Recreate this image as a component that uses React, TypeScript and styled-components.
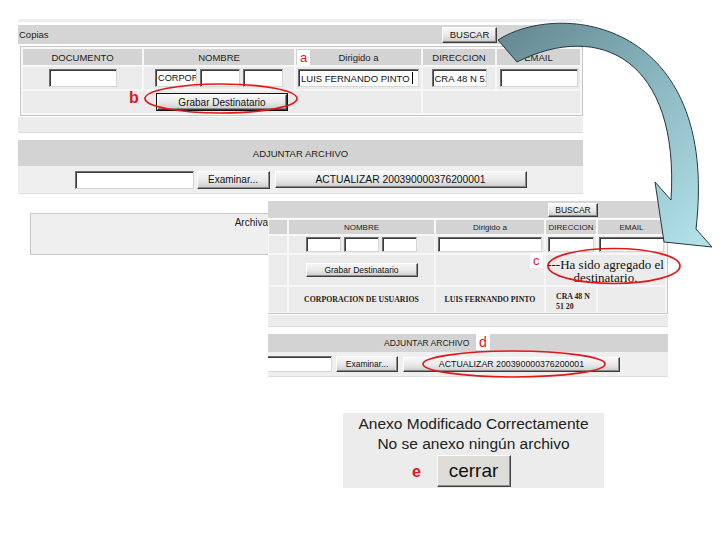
import React from "react";
import styled, { createGlobalStyle } from "styled-components";

const Global = createGlobalStyle`
  html, body { margin: 0; padding: 0; background: #ffffff; }
  #root { width: 720px; height: 540px; }
`;

const Page = styled.div`
  position: relative;
  width: 720px;
  height: 540px;
  overflow: hidden;
  background: #ffffff;
  font-family: "Liberation Sans", Arial, sans-serif;
  color: #1c1c1c;
`;

const Shot = styled.section<{ $x: number; $y: number; $w: number; $h: number }>`
  position: absolute;
  left: ${(p) => p.$x}px;
  top: ${(p) => p.$y}px;
  width: ${(p) => p.$w}px;
  height: ${(p) => p.$h}px;
  display: flex;
  flex-direction: column;
  background: #ffffff;
  overflow: hidden;
`;

const TopLine = styled.div<{ $h: number; $mt: number }>`
  flex: none;
  height: ${(p) => p.$h}px;
  margin-top: ${(p) => p.$mt}px;
  background: #eeeeee;
`;

const Bar = styled.div<{ $h: number; $mt: number; $fs: number; $pr: number }>`
  flex: none;
  height: ${(p) => p.$h}px;
  margin-top: ${(p) => p.$mt}px;
  background: #d5d5d5;
  display: flex;
  align-items: center;
  padding: 0 ${(p) => p.$pr}px 0 1px;
  font-size: ${(p) => p.$fs}px;
`;

const BarTitle = styled.span`
  flex: 1;
`;

const Button = styled.button<{ $w: number; $h: number; $fs: number; $default?: boolean }>`
  box-sizing: border-box;
  flex: none;
  width: ${(p) => p.$w}px;
  height: ${(p) => p.$h}px;
  padding: 0;
  margin: 0;
  font-family: "Liberation Sans", Arial, sans-serif;
  font-size: ${(p) => p.$fs}px;
  color: #111111;
  background: linear-gradient(#f7f7f7 0%, #e8e8e8 55%, #cbcbcb 100%);
  border: 1px solid;
  border-color: #ffffff #3c3c3c #3c3c3c #ffffff;
  box-shadow: inset -1px -1px 0 #8a8a8a${(p) => (p.$default ? ", 0 0 0 1px #111111" : "")};
  white-space: nowrap;
  overflow: hidden;
  cursor: default;
`;

const Field = styled.div<{ $w: number; $h: number; $fs: number; $ml?: number }>`
  box-sizing: border-box;
  flex: none;
  width: ${(p) => p.$w}px;
  height: ${(p) => p.$h}px;
  margin-left: ${(p) => p.$ml ?? 0}px;
  background: #ffffff;
  border: 1px solid;
  border-color: #6e6e6e #d6d6d6 #d6d6d6 #6e6e6e;
  box-shadow: inset 1px 1px 0 #3a3a3a;
  font-size: ${(p) => p.$fs}px;
  padding: 0 1px 0 2px;
  display: flex;
  align-items: center;
  white-space: nowrap;
  overflow: hidden;
  color: #111111;
`;

const Caret = styled.span`
  flex: none;
  display: inline-block;
  width: 1px;
  height: 12px;
  margin-left: 2px;
  background: #000000;
`;

const Frame = styled.div<{ $mt: number; $ml: number; $pad: string; $openLeft?: boolean }>`
  flex: none;
  margin: ${(p) => p.$mt}px 0 0 ${(p) => p.$ml}px;
  border: 1px solid #c6c6c6;
  ${(p) => (p.$openLeft ? "border-left: none; border-top: none;" : "")}
  background: #f7f7f7;
  padding: ${(p) => p.$pad};
`;

const Grid = styled.div<{ $cols: string; $rows: string; $fs: number }>`
  display: grid;
  grid-template-columns: ${(p) => p.$cols};
  grid-template-rows: ${(p) => p.$rows};
  gap: 2px;
  font-size: ${(p) => p.$fs}px;
`;

const HeadCell = styled.div`
  background: #d3d3d3;
  display: flex;
  align-items: center;
  justify-content: center;
  white-space: nowrap;
`;

const Cell = styled.div<{ $span?: string; $justify?: string; $pl?: number; $pt?: number; $gap?: number }>`
  grid-column: ${(p) => p.$span ?? "auto"};
  background: #ebebeb;
  display: flex;
  align-items: center;
  justify-content: ${(p) => p.$justify ?? "center"};
  padding-left: ${(p) => p.$pl ?? 0}px;
  padding-top: ${(p) => p.$pt ?? 0}px;
  gap: ${(p) => p.$gap ?? 3}px;
  min-width: 0;
`;

const DataText = styled.span`
  font-family: "Liberation Serif", "Times New Roman", serif;
  font-weight: bold;
  font-size: 7.8px;
  line-height: 10px;
  white-space: nowrap;
  color: #222222;
`;

const Message = styled.span`
  font-family: "Liberation Serif", "Times New Roman", serif;
  font-size: 13px;
  line-height: 13px;
  text-align: center;
  color: #111111;
  white-space: nowrap;
  padding-top: 2px;
`;

const Strip = styled.div<{ $h: number; $mt: number }>`
  flex: none;
  box-sizing: border-box;
  height: ${(p) => p.$h}px;
  margin-top: ${(p) => p.$mt}px;
  background: #ececec;
  border-bottom: 1px solid #dcdcdc;
`;

const SectionHead = styled.div<{ $h: number; $mt: number; $fs: number; $pl?: number }>`
  flex: none;
  height: ${(p) => p.$h}px;
  margin-top: ${(p) => p.$mt}px;
  background: #d3d3d3;
  display: flex;
  align-items: center;
  justify-content: ${(p) => (p.$pl === undefined ? "center" : "flex-start")};
  padding-left: ${(p) => p.$pl ?? 0}px;
  font-size: ${(p) => p.$fs}px;
  white-space: nowrap;
`;

const FileRow = styled.div<{ $h: number; $center?: boolean; $gap: number }>`
  flex: none;
  box-sizing: border-box;
  height: ${(p) => p.$h}px;
  background: #efefef;
  border-bottom: 1px solid #dedede;
  display: flex;
  align-items: center;
  justify-content: ${(p) => (p.$center ? "center" : "flex-start")};
  gap: ${(p) => p.$gap}px;
`;

const ArchiveBox = styled.div`
  flex: none;
  height: 40px;
  margin: 19px 8px 0 12px;
  border: 1px solid #c8c8c8;
  background: #efefef;
  display: grid;
  grid-template-columns: 237px 1fr;
  font-size: 10px;
`;

const ArchiveLabel = styled.div`
  text-align: right;
  padding-top: 3px;
`;

const Dialog = styled.div`
  box-sizing: border-box;
  height: 100%;
  background: #ececec;
  display: flex;
  flex-direction: column;
  align-items: center;
  padding-top: 1px;
  font-size: 15.5px;
  color: #222222;
`;

const DialogLine = styled.div`
  line-height: 20px;
  white-space: nowrap;
`;

const CloseButton = styled.button`
  box-sizing: border-box;
  width: 74px;
  height: 32px;
  margin: 1px 0 0 0;
  padding: 0;
  font-family: "Liberation Sans", Arial, sans-serif;
  font-size: 19px;
  color: #111111;
  background: #dedcd8;
  border: 1px solid;
  border-color: #ffffff #404040 #404040 #ffffff;
  box-shadow: inset -1px -1px 0 #8c8c8c;
  cursor: default;
`;

const Overlay = styled.svg`
  position: absolute;
  left: 0;
  top: 0;
  width: 720px;
  height: 540px;
  pointer-events: none;
`;

const Mark = styled.span<{ $x: number; $y: number; $fs: number; $bold?: boolean; $boxed?: boolean }>`
  position: absolute;
  left: ${(p) => p.$x}px;
  top: ${(p) => p.$y}px;
  font-family: "Liberation Sans", Arial, sans-serif;
  font-size: ${(p) => p.$fs}px;
  font-weight: ${(p) => (p.$bold ? 700 : 400)};
  line-height: 1;
  padding: 1px 3px;
  color: #e3141c;
  background: ${(p) => (p.$boxed ? "#ffffff" : "transparent")};
`;

const ACT = "ACTUALIZAR 200390000376200001";

function FirstShot() {
  return (
    <Shot $x={18} $y={18} $w={565} $h={245}>
      <TopLine $h={3} $mt={1} />
      <Bar $h={19} $mt={3} $fs={9.5} $pr={86}>
        <BarTitle>Copias</BarTitle>
        <Button $w={55} $h={16} $fs={9.5}>BUSCAR</Button>
      </Bar>
      <Frame $mt={2} $ml={2} $pad="2px">
        <Grid $cols="119px 150px 125px 72px 83px" $rows="16px 22px 22px" $fs={9.5}>
          <HeadCell>DOCUMENTO</HeadCell>
          <HeadCell>NOMBRE</HeadCell>
          <HeadCell>Dirigido a</HeadCell>
          <HeadCell>DIRECCION</HeadCell>
          <HeadCell>EMAIL</HeadCell>

          <Cell>
            <Field $w={68} $h={18} $fs={9.5} />
          </Cell>
          <Cell $gap={3}>
            <Field $w={42} $h={18} $fs={9.2}>CORPOR</Field>
            <Field $w={40} $h={18} $fs={9.5} />
            <Field $w={40} $h={18} $fs={9.5} />
          </Cell>
          <Cell>
            <Field $w={121} $h={18} $fs={9.5}>
              LUIS FERNANDO PINTO
              <Caret />
            </Field>
          </Cell>
          <Cell>
            <Field $w={55} $h={18} $fs={9.5}>CRA 48 N 51 20</Field>
          </Cell>
          <Cell>
            <Field $w={78} $h={18} $fs={9.5} />
          </Cell>

          <Cell $span="1 / 4">
            <Button $w={130} $h={16} $fs={10} $default>
              Grabar Destinatario
            </Button>
          </Cell>
          <Cell $span="4 / 6" />
        </Grid>
      </Frame>
      <Strip $h={16} $mt={1} />
      <SectionHead $h={26} $mt={7} $fs={9.5}>
        ADJUNTAR ARCHIVO
      </SectionHead>
      <FileRow $h={28} $center $gap={3}>
        <Field $w={119} $h={18} $fs={10} />
        <Button $w={73} $h={18} $fs={10}>Examinar...</Button>
        <Button $w={252} $h={17} $fs={10.3} style={{ marginLeft: 2 }}>
          {ACT}
        </Button>
      </FileRow>
      <ArchiveBox>
        <ArchiveLabel>Archiva</ArchiveLabel>
        <div />
      </ArchiveBox>
    </Shot>
  );
}

function SecondShot() {
  return (
    <Shot $x={268} $y={201} $w={400} $h={178}>
      <Bar $h={17} $mt={0} $fs={8.5} $pr={70}>
        <BarTitle />
        <Button $w={50} $h={14} $fs={8.5}>BUSCAR</Button>
      </Bar>
      <Frame $mt={1} $ml={0} $pad="1px 2px 1px 1px" $openLeft>
        <Grid $cols="18px 145px 108px 50px 67px" $rows="14px 17px 30px 25px" $fs={8}>
          <HeadCell />
          <HeadCell>NOMBRE</HeadCell>
          <HeadCell>Dirigido a</HeadCell>
          <HeadCell>DIRECCION</HeadCell>
          <HeadCell>EMAIL</HeadCell>

          <Cell />
          <Cell $gap={3}>
            <Field $w={35} $h={15} $fs={8} />
            <Field $w={35} $h={15} $fs={8} />
            <Field $w={35} $h={15} $fs={8} />
          </Cell>
          <Cell>
            <Field $w={104} $h={15} $fs={8} />
          </Cell>
          <Cell>
            <Field $w={46} $h={15} $fs={8} />
          </Cell>
          <Cell>
            <Field $w={65} $h={15} $fs={8} />
          </Cell>

          <Cell />
          <Cell>
            <Button $w={112} $h={14} $fs={8.5}>Grabar Destinatario</Button>
          </Cell>
          <Cell />
          <Cell $span="4 / 6">
            <Message>
              ---Ha sido agregado el
              <br />
              destinatario.
            </Message>
          </Cell>

          <Cell />
          <Cell>
            <DataText>CORPORACION DE USUARIOS</DataText>
          </Cell>
          <Cell>
            <DataText>LUIS FERNANDO PINTO</DataText>
          </Cell>
          <Cell $justify="flex-start" $pl={10} $pt={5}>
            <DataText>
              CRA 48 N
              <br />
              51 20
            </DataText>
          </Cell>
          <Cell />
        </Grid>
      </Frame>
      <Strip $h={12} $mt={1} />
      <SectionHead $h={18} $mt={7} $fs={8.5} $pl={116}>
        ADJUNTAR ARCHIVO
      </SectionHead>
      <FileRow $h={25} $gap={4}>
        <Field $w={66} $h={16} $fs={8} $ml={-2} />
        <Button $w={62} $h={16} $fs={8.5}>Examinar...</Button>
        <Button $w={217} $h={15} $fs={8.8} style={{ marginLeft: 1 }}>
          {ACT}
        </Button>
      </FileRow>
    </Shot>
  );
}

function ResultShot() {
  return (
    <Shot $x={343} $y={413} $w={261} $h={75}>
      <Dialog>
        <DialogLine>Anexo Modificado Correctamente</DialogLine>
        <DialogLine>No se anexo ningún archivo</DialogLine>
        <CloseButton>cerrar</CloseButton>
      </Dialog>
    </Shot>
  );
}

function Annotations() {
  return (
    <Overlay viewBox="0 0 720 540">
      <defs>
        <linearGradient id="arrowFill" gradientUnits="userSpaceOnUse" x1="500" y1="40" x2="700" y2="240">
          <stop offset="0" stopColor="#668a93" />
          <stop offset="0.45" stopColor="#86b3bc" />
          <stop offset="1" stopColor="#b2e0e8" />
        </linearGradient>
      </defs>
      <path
        d="M498,40 C560,0 720,20 696,229 L712,247 L664,242 L655,182 L671,200 C680,60 600,20 517,62 Z"
        fill="url(#arrowFill)"
        stroke="#27383c"
        strokeWidth="1"
        strokeLinejoin="miter"
      />
      <g fill="none" stroke="#e01818" strokeWidth="1.7">
        <ellipse cx="221" cy="98.5" rx="76" ry="14.5" />
        <ellipse cx="614" cy="266" rx="66" ry="17.5" />
        <ellipse cx="514" cy="364" rx="91" ry="13" />
      </g>
    </Overlay>
  );
}

export default function App() {
  return (
    <Page>
      <Global />
      <FirstShot />
      <SecondShot />
      <ResultShot />
      <Annotations />
      <Mark $x={297} $y={50} $fs={13} $boxed>a</Mark>
      <Mark $x={126} $y={89} $fs={16} $bold>b</Mark>
      <Mark $x={530} $y={253} $fs={13} $boxed>c</Mark>
      <Mark $x={476} $y={334} $fs={14} $boxed>d</Mark>
      <Mark $x={409} $y={463} $fs={16} $bold>e</Mark>
    </Page>
  );
}
